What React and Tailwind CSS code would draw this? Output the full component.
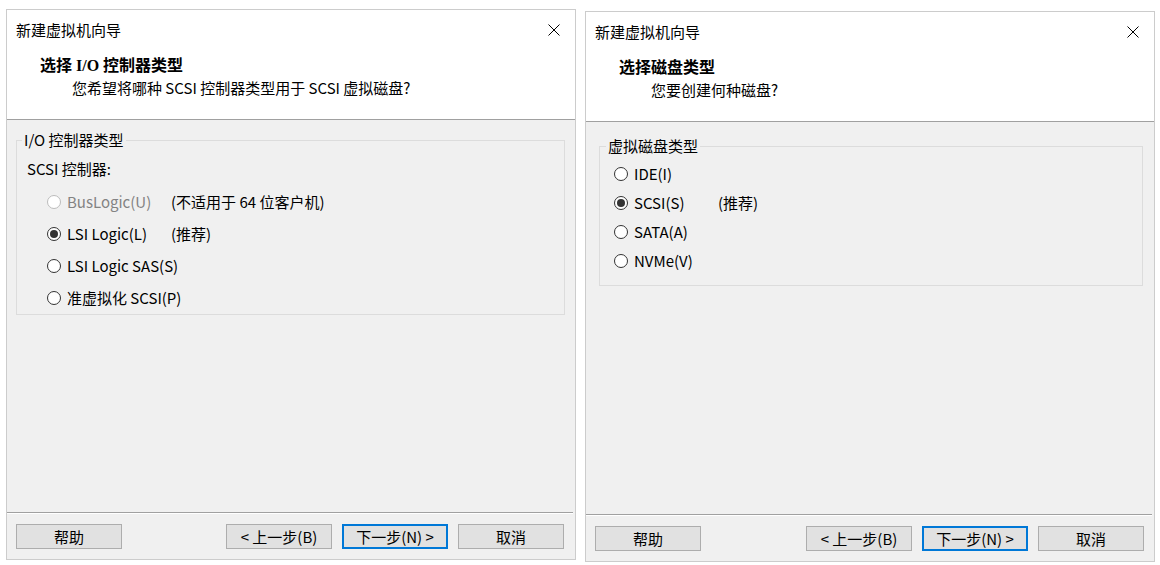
import React from "react";

const FONT = "font-['Noto_Sans_CJK_SC',sans-serif]";

function Radio({ checked, disabled }) {
  return (
    <span
      className={`w-[14px] h-[14px] rounded-full border bg-white flex items-center justify-center shrink-0 ${
        disabled ? "border-[#bcbcbc]" : "border-[#333333]"
      }`}
    >
      {checked && <span className="w-[8px] h-[8px] rounded-full bg-[#333333]" />}
    </span>
  );
}

function Option({ label, note, checked, disabled, labelW, rowH }) {
  return (
    <div className={`flex items-center whitespace-nowrap ${rowH}`}>
      <Radio checked={checked} disabled={disabled} />
      <span
        className={`ml-[6px] leading-[20px] shrink-0 whitespace-nowrap ${labelW} ${
          disabled ? "text-[#838383]" : "text-black"
        }`}
      >
        {label}
      </span>
      {note && <span className="leading-[20px] text-black whitespace-nowrap">{note}</span>}
    </div>
  );
}

function Btn({ children, primary }) {
  return (
    <div
      className={`w-[106px] h-[25px] flex items-center justify-center bg-[#e1e1e1] text-[15px] leading-[20px] text-black whitespace-nowrap ${
        primary ? "border-2 border-[#0078d7]" : "border border-[#adadad]"
      }`}
    >
      {children}
    </div>
  );
}

function CloseIcon() {
  return (
    <svg width="12" height="12" viewBox="0 0 12 12" className="block">
      <path d="M0.5 0.5 L11.5 11.5 M11.5 0.5 L0.5 11.5" stroke="#000" strokeWidth="1" fill="none" />
    </svg>
  );
}

function Dialog({ className, title, sub, children, footerPad }) {
  return (
    <div
      className={`w-[570px] h-[551px] border border-[#cccccc] bg-[#f0f0f0] flex flex-col ${FONT} text-[15px] text-black ${className}`}
    >
      <div className="h-[110px] bg-white border-b border-[#a0a0a0] flex flex-col shrink-0">
        <div className="h-[40px] flex items-center justify-between pl-[9px] pr-[15px]">
          <span className="leading-[20px]">新建虚拟机向导</span>
          <CloseIcon />
        </div>
        <div className="mt-[6px] pl-[33px] leading-[20px] text-[16px] font-bold font-['Liberation_Serif','Noto_Sans_CJK_SC',serif]">
          {title}
        </div>
        <div className="mt-[2px] pl-[65px] leading-[20px]">{sub}</div>
      </div>
      <div className="flex-1 flex flex-col">{children}</div>
      <div className="shrink-0">
        <div className="h-[2px] border-t border-[#a0a0a0] border-b border-b-white mr-[2px]" />
        <div className={`flex items-center pt-[10px] pb-[10px] ${footerPad}`}>
          <Btn>帮助</Btn>
          <div className="flex-1" />
          <div className="flex gap-[10px]">
            <Btn>&lt; 上一步(B)</Btn>
            <Btn primary>下一步(N) &gt;</Btn>
            <Btn>取消</Btn>
          </div>
        </div>
      </div>
    </div>
  );
}

export default function App() {
  return (
    <div className="w-[1160px] h-[565px] bg-white flex items-start pl-[6px]">
      <Dialog
        className="mt-[9px]"
        title="选择 I/O 控制器类型"
        sub="您希望将哪种 SCSI 控制器类型用于 SCSI 虚拟磁盘?"
        footerPad="pl-[9px] pr-[11px]"
      >
        <fieldset className="mt-[10px] ml-[9px] mr-[10px] border border-[#dcdcdc]">
          <legend className="ml-[5px] px-[2px] leading-[20px]">I/O 控制器类型</legend>
          <div className="pl-[10px] pt-[9px]">
            <div className="leading-[20px]">SCSI 控制器:</div>
            <div className="mt-[7px] ml-[20px]">
              <Option label="BusLogic(U)" note="(不适用于 64 位客户机)" disabled labelW="w-[104px]" rowH="h-[32px]" />
              <Option label="LSI Logic(L)" note="(推荐)" checked labelW="w-[104px]" rowH="h-[32px]" />
              <Option label="LSI Logic SAS(S)" labelW="w-[130px]" rowH="h-[32px]" />
              <Option label="准虚拟化 SCSI(P)" labelW="w-[130px]" rowH="h-[32px]" />
            </div>
          </div>
        </fieldset>
      </Dialog>
      <Dialog
        className="mt-[11px] ml-[9px] w-[569px]"
        title="选择磁盘类型"
        sub="您要创建何种磁盘?"
        footerPad="pl-[9px] pr-[10px]"
      >
        <fieldset className="mt-[14px] ml-[13px] mr-[11px] border border-[#dcdcdc]">
          <legend className="ml-[6px] px-[2px] leading-[20px]">虚拟磁盘类型</legend>
          <div className="pl-[14px] pt-[3px] pb-[10px]">
            <Option label="IDE(I)" labelW="w-[84px]" rowH="h-[29px]" />
            <Option label="SCSI(S)" note="(推荐)" checked labelW="w-[84px]" rowH="h-[29px]" />
            <Option label="SATA(A)" labelW="w-[84px]" rowH="h-[29px]" />
            <Option label="NVMe(V)" labelW="w-[84px]" rowH="h-[29px]" />
          </div>
        </fieldset>
      </Dialog>
    </div>
  );
}
